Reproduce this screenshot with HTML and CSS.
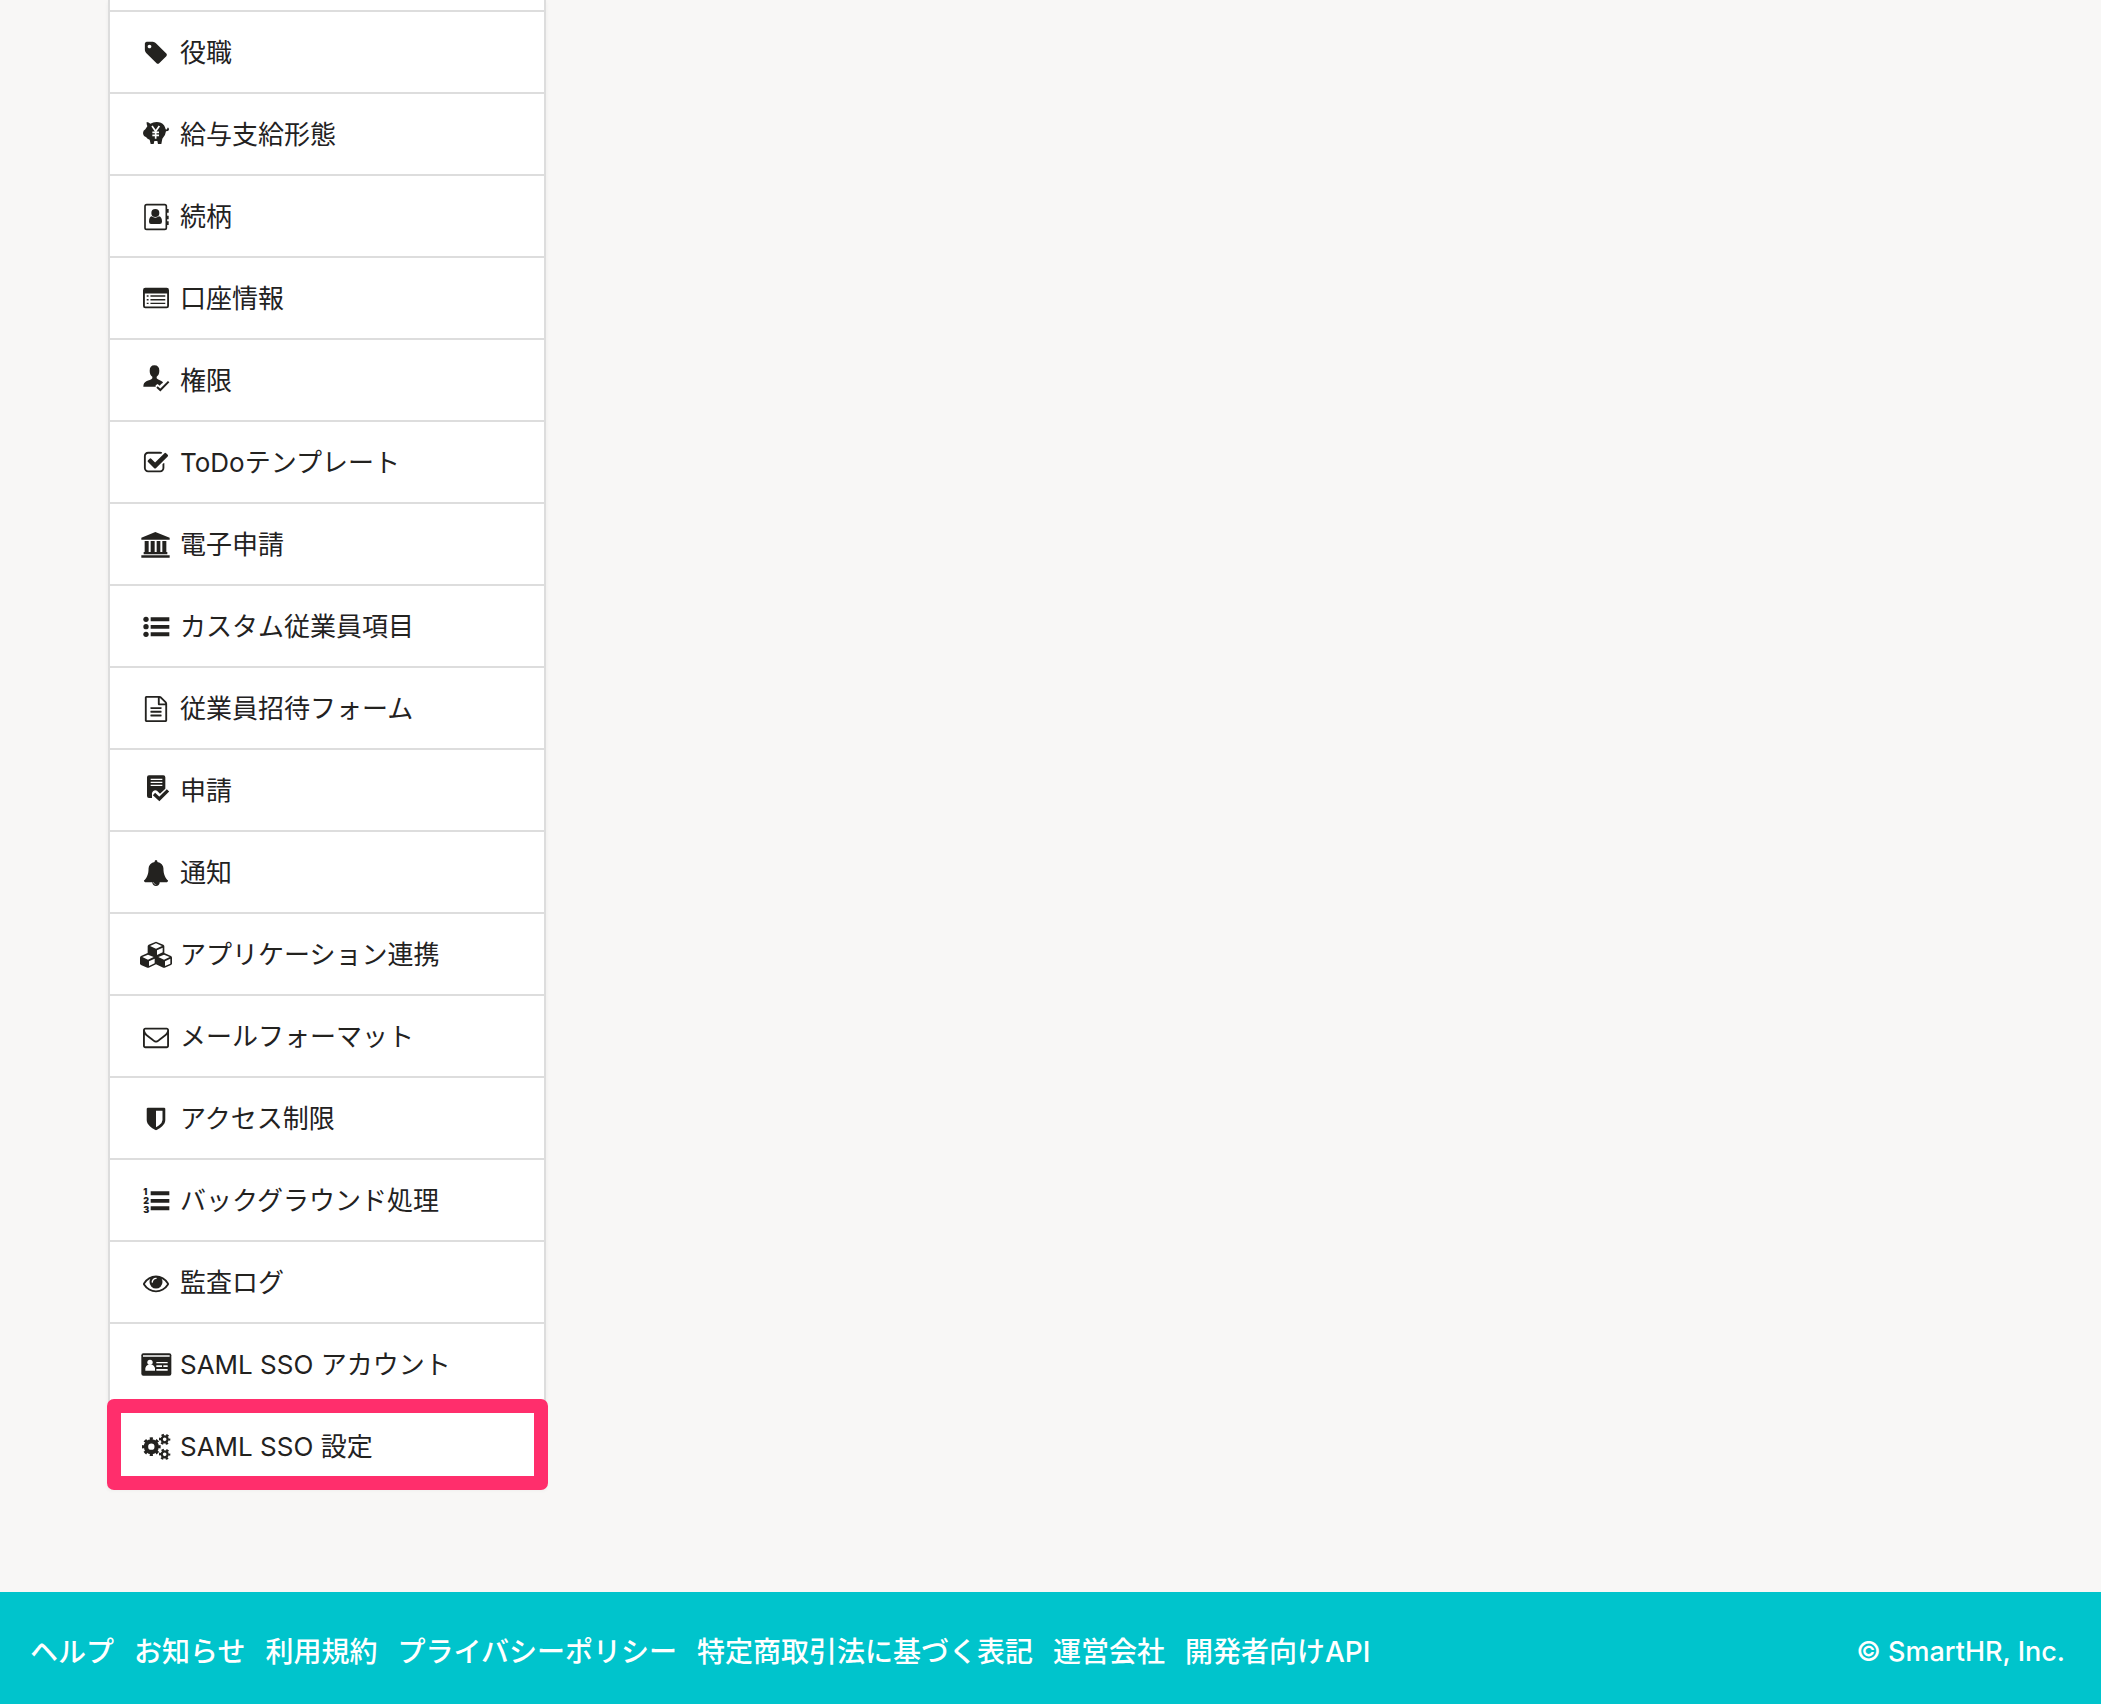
FILE: index.html
```html
<!DOCTYPE html>
<html lang="ja">
<head>
<meta charset="utf-8">
<meta name="viewport" content="width=device-width, initial-scale=1">
<title>SmartHR</title>
<link rel="stylesheet" href="styles.css">
</head>
<body>
<main class="main">
<nav class="side-nav" aria-label="共通設定">
<ul class="side-nav-list">
<li class="side-nav-item"><a class="side-nav-link" href="#"><svg class="icon" viewBox="-207 0 2206 1792" aria-hidden="true"><path d="M576 448q0-53-37.500-90.500t-90.500-37.500-90.500 37.500-37.500 90.500 37.500 90.500 90.500 37.500 90.500-37.500 37.500-90.500zm1067 576q0 53-37 90l-491 492q-39 37-91 37-53 0-90-37l-715-716q-38-37-64.500-101t-26.500-117v-416q0-52 38-90t90-38h416q53 0 117 26.500t102 64.500l715 714q37 39 37 91z"/></svg>役職</a></li>
<li class="side-nav-item"><a class="side-nav-link" href="#"><svg class="icon" viewBox="0 0 96 78" aria-hidden="true"><path d="M20 0Q26 1 31 5Q39 0 50 0Q64 0 72 10Q75 14 77 22Q81 24 82 19Q83 15 86 18L87 24Q84 28 78 28Q77 40 67 50L64 66H54L52 57H43L41 66H32L29 53Q22 51 18 45Q10 43 9 33Q9 26 16 22Q19 17 22 13Q19 7 20 0Z"/><path class="yen" d="M36 12L47 28L58 12M47 28V50M37 31H57M37 40H57"/></svg>給与支給形態</a></li>
<li class="side-nav-item"><a class="side-nav-link" href="#"><svg class="icon" viewBox="0 0 96 78" aria-hidden="true"><rect class="line" x="15" y="2" width="64" height="74" rx="5"/><path d="M80 15h6v11h-6zM80 35h6v11h-6zM80 52h6v11h-6z"/><circle cx="46" cy="27" r="12"/><path d="M35 37Q46 45 57 37Q66 39 66 53Q66 60 59 60H33Q27 60 27 53Q27 39 35 37Z"/></svg>続柄</a></li>
<li class="side-nav-item"><a class="side-nav-link" href="#"><svg class="icon" viewBox="-207 0 2206 1792" aria-hidden="true"><path fill-rule="evenodd" d="M160 128H1632Q1792 128 1792 288V1376Q1792 1536 1632 1536H160Q0 1536 0 1376V288Q0 128 160 128ZM128 512V1376Q128 1408 160 1408H1632Q1664 1408 1664 1376V512ZM256 640H384V736H256ZM512 640H1536V736H512ZM256 896H384V992H256ZM512 896H1536V992H512ZM256 1152H384V1248H256ZM512 1152H1536V1248H512Z"/></svg>口座情報</a></li>
<li class="side-nav-item"><a class="side-nav-link" href="#"><svg class="icon" viewBox="0 0 96 78" aria-hidden="true"><path d="M43-8C53-8 58-2 58 8C58 18 54 23 50 26V31C53 36 66 37 69 44C65 46 62 49 59 53L53 48L47 52V56H10C10 48 13 43 19 40C26 37 34 36 37 31V26C32 23 29 17 29 8C29-2 34-8 43-8Z"/><path class="check" d="M51 57L61 66L86 41"/></svg>権限</a></li>
<li class="side-nav-item"><a class="side-nav-link" href="#"><svg class="icon" viewBox="-207 0 2206 1792" aria-hidden="true"><path d="M1472 930v318q0 119-84.500 203.500t-203.500 84.500h-832q-119 0-203.500-84.500t-84.500-203.500v-832q0-119 84.500-203.500t203.500-84.500h832q63 0 117 25 15 7 18 23 3 17-9 29l-49 49q-10 10-23 10-3 0-9-2-23-6-45-6h-832q-66 0-113 47t-47 113v832q0 66 47 113t113 47h832q66 0 113-47t47-113v-254q0-13 9-22l64-64q10-10 23-10 6 0 12 3 20 8 20 29zm231-489l-814 814q-24 24-57 24t-57-24l-430-430q-24-24-24-57t24-57l110-110q24-24 57-24t57 24l263 263 647-647q24-24 57-24t57 24l110 110q24 24 24 57t-24 57z"/></svg>ToDoテンプレート</a></li>
<li class="side-nav-item"><a class="side-nav-link" href="#"><svg class="icon" viewBox="0 0 96 78" aria-hidden="true"><path d="M46 0L89 17V23H4V17ZM14 27H26V60H32V27H44V60H50V27H61V60H67V27H79V60H82V67H11V60H14ZM4 70H89V77H4Z"/></svg>電子申請</a></li>
<li class="side-nav-item"><a class="side-nav-link" href="#"><svg class="icon" viewBox="0 0 96 78" aria-hidden="true"><circle cx="18" cy="16" r="8"/><circle cx="18" cy="38" r="8"/><circle cx="18" cy="61" r="8"/><path d="M32 10h56v12H32zM32 33h56v11H32zM32 55h56v12H32z"/></svg>カスタム従業員項目</a></li>
<li class="side-nav-item"><a class="side-nav-link" href="#"><svg class="icon" viewBox="-207 0 2206 1792" aria-hidden="true"><path d="M1596 380q28 28 48 76t20 88v1152q0 40-28 68t-68 28h-1344q-40 0-68-28t-28-68v-1600q0-40 28-68t68-28h896q40 0 88 20t76 48zm-444-244v376h376q-10-29-22-41l-313-313q-12-12-41-22zm384 1528v-1024h-416q-40 0-68-28t-28-68v-416h-768v1536h1280zm-1024-864q0-14 9-23t23-9h704q14 0 23 9t9 23v64q0 14-9 23t-23 9h-704q-14 0-23-9t-9-23v-64zm736 224q14 0 23 9t9 23v64q0 14-9 23t-23 9h-704q-14 0-23-9t-9-23v-64q0-14 9-23t23-9h704zm0 256q14 0 23 9t9 23v64q0 14-9 23t-23 9h-704q-14 0-23-9t-9-23v-64q0-14 9-23t23-9h704z"/></svg>従業員招待フォーム</a></li>
<li class="side-nav-item"><a class="side-nav-link" href="#"><svg class="icon" viewBox="0 0 96 78" aria-hidden="true"><path d="M27-8H70Q76-8 76-2V32L60 47L51 38Q45 34 39 40Q33 46 36 53L36 60H27Q21 60 21 54V-2Q21-8 27-8Z"/><path class="cutout-line" d="M32 4H67M32 13H67M32 22H67"/><path class="check-bold" d="M42 48L58 63L84 37"/></svg>申請</a></li>
<li class="side-nav-item"><a class="side-nav-link" href="#"><svg class="icon" viewBox="-207 0 2206 1792" aria-hidden="true"><path d="M912 1696q0-16-16-16-59 0-101.500-42.500t-42.500-101.500q0-16-16-16t-16 16q0 73 51.500 124.500t124.500 51.500q16 0 16-16zm816-288q0 52-38 90t-90 38h-448q0 106-75 181t-181 75-181-75-75-181h-448q-52 0-90-38t-38-90q50-42 91-88t85-119.500 74.500-158.500 50-206 19.500-260q0-152 117-282.500t307-158.500q-8-19-8-39 0-40 28-68t68-28 68 28 28 68q0 20-8 39 190 28 307 158.500t117 282.500q0 139 19.500 260t50 206 74.500 158.500 85 119.500 91 88z"/></svg>通知</a></li>
<li class="side-nav-item"><a class="side-nav-link" href="#"><svg class="icon" viewBox="0 0 96 78" aria-hidden="true"><path fill-rule="evenodd" d="M48-1L70 8Q73 10 73 13V33L93 42Q96 44 96 47V66L93 69L74 77H70L48 67L26 77H22L3 69L0 66V47Q0 44 3 42L23 33V13Q23 10 26 8ZM48 4L30 12L48 20L66 12ZM51 25V39L68 31V17ZM24 38L7 45L24 53L41 45ZM27 58V72L44 64V50ZM72 38L55 45L72 53L89 45ZM75 58V72L91 65V50Z"/></svg>アプリケーション連携</a></li>
<li class="side-nav-item"><a class="side-nav-link" href="#"><svg class="icon" viewBox="-207 0 2206 1792" aria-hidden="true"><path d="M1664 1504v-768q-32 36-69 66-268 206-426 338-51 43-83 67t-86.500 48.500-102.500 24.500h-2q-48 0-102.500-24.500t-86.500-48.500-83-67q-158-132-426-338-37-30-69-66v768q0 13 9.500 22.500t22.500 9.500h1472q13 0 22.500-9.500t9.500-22.500zm0-1051v-24.500l-.5-13-3-12.500-5.500-9-9-7.500-14-2.500h-1472q-13 0-22.500 9.500t-9.500 22.500q0 168 147 284 193 152 401 317 6 5 35 29.500t46 37.500 44.500 31.500 50.500 27.500 43 9h2q20 0 43-9t50.500-27.500 44.500-31.500 46-37.500 35-29.500q208-165 401-317 54-43 100.500-115.500t46.500-131.500zm128-37v1088q0 66-47 113t-113 47h-1472q-66 0-113-47t-47-113v-1088q0-66 47-113t113-47h1472q66 0 113 47t47 113z"/></svg>メールフォーマット</a></li>
<li class="side-nav-item"><a class="side-nav-link" href="#"><svg class="icon" viewBox="-207 0 2206 1792" aria-hidden="true"><path d="M1344 960v-640h-448v1137q119-63 213-137 235-184 235-360zm192-768v768q0 86-33.500 170.500t-83 150-118 127.500-126.500 103-121 77.500-89.500 49.500-42.500 20q-12 6-26 6t-26-6q-16-7-42.500-20t-89.500-49.500-121-77.500-126.500-103-118-127.500-83-150-33.500-170.500v-768q0-26 19-45t45-19h1152q26 0 45 19t19 45z"/></svg>アクセス制限</a></li>
<li class="side-nav-item"><a class="side-nav-link" href="#"><svg class="icon" viewBox="0 0 96 78" aria-hidden="true"><text class="icon-digit" x="10" y="20">1</text><text class="icon-digit" x="10" y="48">2</text><text class="icon-digit" x="10" y="76">3</text><path d="M32 10h56v12H32zM32 33h56v11H32zM32 55h56v12H32z"/></svg>バックグラウンド処理</a></li>
<li class="side-nav-item"><a class="side-nav-link" href="#"><svg class="icon" viewBox="-207 0 2206 1792" aria-hidden="true"><path d="M1664 960q-152-236-381-353 61 104 61 225 0 185-131.500 316.500t-316.500 131.500-316.500-131.500-131.500-316.500q0-121 61-225-229 117-381 353 133 205 333.500 326.500t434.500 121.500 434.500-121.500 333.500-326.500zm-720-384q0-20-14-34t-34-14q-125 0-214.500 89.500t-89.500 214.500q0 20 14 34t34 14 34-14 14-34q0-86 61-147t147-61q20 0 34-14t14-34zm848 384q0 34-20 69-140 230-376.500 368.500t-499.500 138.500-499.500-139-376.500-368q-20-35-20-69t20-69q140-229 376.500-368t499.500-139 499.500 139 376.500 368q20 35 20 69z"/></svg>監査ログ</a></li>
<li class="side-nav-item"><a class="side-nav-link" href="#"><svg class="icon" viewBox="0 0 96 78" aria-hidden="true"><rect x="4" y="4" width="90" height="67" rx="6"/><path class="cutout" d="M9 10H89V14H9ZM49 30H83V34H49ZM49 40H66V45H49ZM70 40H83V45H70ZM49 51H83V56H49ZM24 38Q18 40 16 48V56H45V48Q43 40 37 38Z"/><circle class="cutout" cx="30" cy="31" r="8"/></svg>SAML SSO アカウント</a></li>
<li class="side-nav-item is-highlighted"><a class="side-nav-link" href="#"><svg class="icon" viewBox="0 0 96 78" aria-hidden="true"><circle class="gear-ring" cx="34" cy="38" r="16"/><circle class="gear-teeth" cx="34" cy="38" r="24" pathLength="16"/><circle class="gear-ring-small" cx="74" cy="16" r="9"/><circle class="gear-teeth-small" cx="74" cy="16" r="14" pathLength="12"/><circle class="gear-ring-small" cx="74" cy="61" r="9"/><circle class="gear-teeth-small" cx="74" cy="61" r="14" pathLength="12"/></svg>SAML SSO 設定</a></li>
</ul>
</nav>
</main>
<footer class="footer">
<ul class="footer-links">
<li><a class="footer-link" href="#">ヘルプ</a></li>
<li><a class="footer-link" href="#">お知らせ</a></li>
<li><a class="footer-link" href="#">利用規約</a></li>
<li><a class="footer-link" href="#">プライバシーポリシー</a></li>
<li><a class="footer-link" href="#">特定商取引法に基づく表記</a></li>
<li><a class="footer-link" href="#">運営会社</a></li>
<li><a class="footer-link" href="#">開発者向けAPI</a></li>
</ul>
<small class="copyright">© SmartHR, Inc.</small>
</footer>
</body>
</html>
```
FILE: styles.css
```css
* {
  box-sizing: border-box;
}

body {
  display: flex;
  flex-direction: column;
  min-height: 100vh;
  margin: 0;
  background: #f8f7f6;
  color: #23221f;
  font-family: Inter, "Noto Sans CJK JP", sans-serif;
  font-size: 26px;
  line-height: 40px;
}

ul {
  margin: 0;
  padding: 0;
  list-style: none;
}

a {
  color: inherit;
  text-decoration: none;
}

.main {
  flex: 1;
  padding: 0 108px 104px;
}

.side-nav {
  width: 438px;
  padding-top: 10px;
  border: solid #ddd;
  border-width: 0 2px 2px;
  background: #fff;
  box-shadow: 0 2px 4px rgba(0, 0, 0, 0.05);
}

.side-nav-item {
  position: relative;
  border-top: 2px solid #ddd;
}

.side-nav-link {
  display: flex;
  align-items: center;
  gap: 8px;
  padding: 21px 30px 19px;
}

.is-highlighted::after {
  content: "";
  position: absolute;
  inset: -7px -4px -4px -3px;
  border: 14px solid #ff2e6c;
  border-radius: 7px;
  pointer-events: none;
}

.icon {
  flex: none;
  width: 32px;
  height: 26px;
  overflow: visible;
  fill: currentColor;
}

.line,
.check,
.check-bold {
  fill: none;
  stroke: currentColor;
  stroke-width: 5;
}

.check {
  stroke-width: 6;
}

.check-bold {
  stroke-width: 10;
}

.cutout {
  fill: #fff;
}

.cutout-line,
.yen {
  fill: none;
  stroke: #fff;
  stroke-width: 4;
}

.yen {
  stroke-width: 5;
}

.icon-digit {
  font-size: 27px;
  font-weight: 900;
}

.gear-ring,
.gear-teeth,
.gear-ring-small,
.gear-teeth-small {
  fill: none;
  stroke: currentColor;
}

.gear-ring {
  stroke-width: 13;
}

.gear-teeth {
  stroke-width: 8;
  stroke-dasharray: 1 1;
  stroke-dashoffset: 0.5;
}

.gear-ring-small {
  stroke-width: 7;
}

.gear-teeth-small {
  stroke-width: 6;
  stroke-dasharray: 1 1;
  stroke-dashoffset: 0.5;
}

.footer {
  display: flex;
  align-items: center;
  justify-content: space-between;
  padding: 40px 36px 32px 30px;
  background: #00c4cc;
  color: #fff;
  font-size: 28px;
  font-weight: 500;
}

.footer-links {
  display: flex;
  flex-wrap: wrap;
  gap: 0 20px;
}

.copyright {
  font-size: 27px;
}
```
